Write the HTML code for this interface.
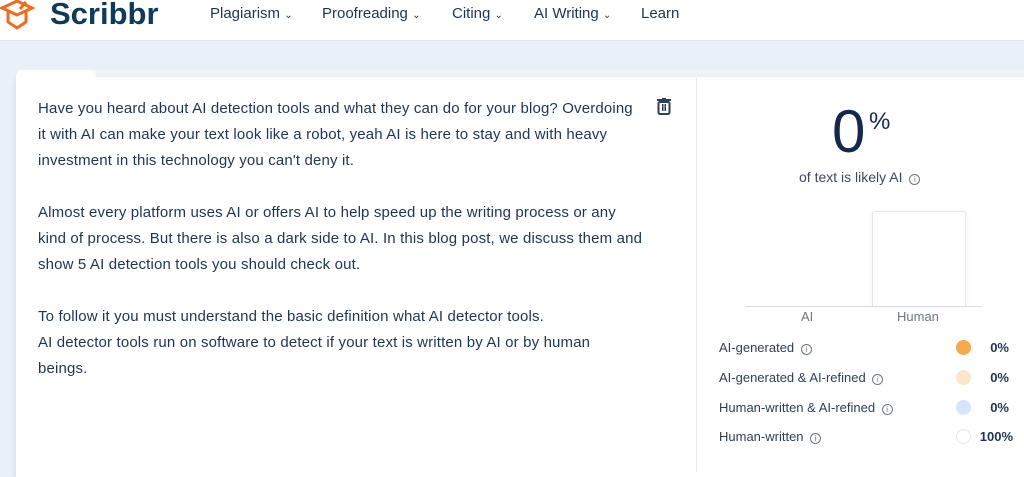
<!DOCTYPE html>
<html><head><style>
*{margin:0;padding:0;box-sizing:border-box}
body{width:1024px;height:472px;overflow:hidden;background:#e8f0fa;font-family:"Liberation Sans",sans-serif;color:#1d3557;position:relative}
.nav{position:absolute;left:0;top:0;width:1024px;height:41px;background:#fff;border-bottom:1px solid #dde6f0}
.logo{position:absolute;left:50px;top:-4px;font-size:31px;font-weight:bold;color:#0e3b5c}
.menu{position:absolute;top:5px;font-size:15px;color:#1d3557}
.card{position:absolute;left:16px;top:77px;width:1020px;height:400px;background:#fff;border-radius:6px 0 0 0;box-shadow:-2px 0 4px rgba(0,0,0,.06)}
.strip{position:absolute;left:88px;top:70px;width:940px;height:8px;background:#f1f3f6;border-radius:8px 0 0 0}
.tab{position:absolute;left:16px;top:70px;width:80px;height:12px;background:#fff;border-radius:6px 6px 0 0}
.text{position:absolute;left:38px;top:96px;font-size:15px;line-height:26px;color:#1d3557;white-space:nowrap;letter-spacing:0.15px}
.div{position:absolute;left:696px;top:78px;width:1px;height:394px;background:#e6e9ee}
.big{position:absolute;left:832px;top:100px;font-size:60px;color:#13284d;line-height:64px}
.pct{position:absolute;left:869px;top:108px;font-size:24px;color:#13284d}
.sub{position:absolute;left:799px;top:169px;font-size:14px;color:#3a4a63}
.info{display:inline-block;width:11px;height:11px;border:1px solid #6b7688;border-radius:50%;font-size:8px;line-height:9px;text-align:center;color:#6b7688;vertical-align:0px;margin-left:3px}
.bar{position:absolute;left:872px;top:211px;width:94px;height:96px;background:#fff;border:1px solid #e4e7ec;border-bottom:none;border-radius:3px 3px 0 0;box-shadow:0 0 6px rgba(0,0,0,.05)}
.axis{position:absolute;left:745px;top:306px;width:237px;height:1px;background:#d8dde5}
.lab{position:absolute;top:309px;font-size:13px;color:#6b7688}
.row{position:absolute;left:719px;font-size:13px;color:#2f3e58}
.dot{position:absolute;left:956px;width:15px;height:15px;border-radius:50%}
.val{position:absolute;font-size:13px;color:#1d3557;font-weight:bold;text-align:right;width:50px;left:959px}
</style></head><body>
<div class="nav">
<svg style="position:absolute;left:0;top:0" width="36" height="34" viewBox="0 0 36 34"><path d="M2 8 L17 1 L32 8 L17 15 Z" fill="none" stroke="#f26b1d" stroke-width="3"/><path d="M8 12 V22 L17 28 L26 22 V12" fill="none" stroke="#f26b1d" stroke-width="3"/><path d="M20 9 L26 2" stroke="#f26b1d" stroke-width="3"/></svg>
<div class="logo">Scribbr</div>
<div class="menu" style="left:210px">Plagiarism <span style="font-size:10px">&#8964;</span></div>
<div class="menu" style="left:322px">Proofreading <span style="font-size:10px">&#8964;</span></div>
<div class="menu" style="left:452px">Citing <span style="font-size:10px">&#8964;</span></div>
<div class="menu" style="left:534px">AI Writing <span style="font-size:10px">&#8964;</span></div>
<div class="menu" style="left:641px">Learn</div>
</div>
<div class="strip"></div>
<div class="card"></div>
<div class="tab"></div>
<div class="text">Have you heard about AI detection tools and what they can do for your blog? Overdoing<br>it with AI can make your text look like a robot, yeah AI is here to stay and with heavy<br>investment in this technology you can't deny it.<br><br>Almost every platform uses AI or offers AI to help speed up the writing process or any<br>kind of process. But there is also a dark side to AI. In this blog post, we discuss them and<br>show 5 AI detection tools you should check out.<br><br>To follow it you must understand the basic definition what AI detector tools.<br>AI detector tools run on software to detect if your text is written by AI or by human<br>beings.</div>
<svg style="position:absolute;left:657px;top:98px" width="14" height="17" viewBox="0 0 14 17"><rect x="0" y="1" width="14" height="2" fill="#2c3e5c"/><rect x="5" y="0" width="4" height="2" fill="#2c3e5c"/><rect x="1.5" y="4" width="11" height="12" rx="1.5" fill="none" stroke="#2c3e5c" stroke-width="2"/><rect x="5" y="6" width="1.5" height="7" fill="#2c3e5c"/><rect x="7.5" y="6" width="1.5" height="7" fill="#2c3e5c"/></svg>
<div class="div"></div>
<div class="big">0</div><div class="pct">%</div>
<div class="sub">of text is likely AI <span class="info">i</span></div>
<div class="bar"></div><div class="axis"></div>
<div class="lab" style="left:801px">AI</div><div class="lab" style="left:897px">Human</div>
<div class="row" style="top:340px">AI-generated <span class="info">i</span></div>
<div class="row" style="top:370px">AI-generated &amp; AI-refined <span class="info">i</span></div>
<div class="row" style="top:400px">Human-written &amp; AI-refined <span class="info">i</span></div>
<div class="row" style="top:429px">Human-written <span class="info">i</span></div>
<div class="dot" style="top:340px;background:#f7a84a"></div>
<div class="dot" style="top:370px;background:#fde5c8"></div>
<div class="dot" style="top:400px;background:#d6e5fb"></div>
<div class="dot" style="top:429px;background:#fff;border:1px solid #e3e6ea"></div>
<div class="val" style="top:340px">0%</div>
<div class="val" style="top:370px">0%</div>
<div class="val" style="top:400px">0%</div>
<div class="val" style="top:429px;left:963px">100%</div>
</body></html>
